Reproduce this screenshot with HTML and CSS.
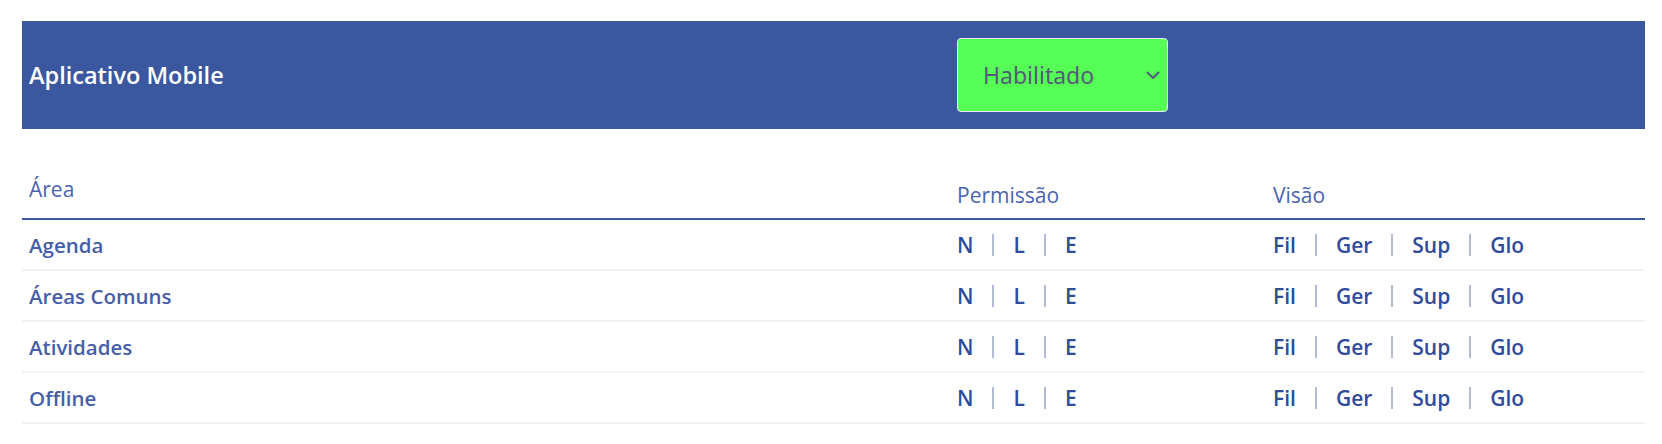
FILE: index.html
```html
<!DOCTYPE html>
<html lang="pt-BR">
<head>
<meta charset="utf-8">
<title>Aplicativo Mobile</title>
<link rel="stylesheet" href="styles.css">
</head>
<body>
<div class="page">
  <div class="bar">
    <div class="bar-title">Aplicativo Mobile</div>
    <div class="bar-control">
      <div class="select-wrap">
        <select class="select">
          <option>Habilitado</option>
          <option>Desabilitado</option>
        </select>
        <svg class="chevron" width="14" height="8" viewBox="0 0 14 8"><path d="M1 1 L7 7 L13 1" fill="none" stroke="#555a7a" stroke-width="2"/></svg>
      </div>
    </div>
    <div></div>
  </div>

  <table class="perm">
    <colgroup>
      <col class="col-area">
      <col class="col-perm">
      <col class="col-vis">
    </colgroup>
    <thead>
      <tr>
        <th class="th-area">Área</th>
        <th>Permissão</th>
        <th>Visão</th>
      </tr>
    </thead>
    <tbody>
      <tr>
        <td class="name">Agenda</td>
        <td><div class="opts"><span>N</span><i class="sep"></i><span>L</span><i class="sep"></i><span>E</span></div></td>
        <td><div class="opts"><span>Fil</span><i class="sep"></i><span>Ger</span><i class="sep"></i><span>Sup</span><i class="sep"></i><span>Glo</span></div></td>
      </tr>
      <tr>
        <td class="name">Áreas Comuns</td>
        <td><div class="opts"><span>N</span><i class="sep"></i><span>L</span><i class="sep"></i><span>E</span></div></td>
        <td><div class="opts"><span>Fil</span><i class="sep"></i><span>Ger</span><i class="sep"></i><span>Sup</span><i class="sep"></i><span>Glo</span></div></td>
      </tr>
      <tr>
        <td class="name">Atividades</td>
        <td><div class="opts"><span>N</span><i class="sep"></i><span>L</span><i class="sep"></i><span>E</span></div></td>
        <td><div class="opts"><span>Fil</span><i class="sep"></i><span>Ger</span><i class="sep"></i><span>Sup</span><i class="sep"></i><span>Glo</span></div></td>
      </tr>
      <tr>
        <td class="name">Offline</td>
        <td><div class="opts"><span>N</span><i class="sep"></i><span>L</span><i class="sep"></i><span>E</span></div></td>
        <td><div class="opts"><span>Fil</span><i class="sep"></i><span>Ger</span><i class="sep"></i><span>Sup</span><i class="sep"></i><span>Glo</span></div></td>
      </tr>
    </tbody>
  </table>
</div>
</body>
</html>
```

FILE: styles.css
```css
html, body {
  margin: 0;
  padding: 0;
  background: #ffffff;
}

.page {
  padding: 21px 17px 0 22px;
  font-family: "Open Sans", "Noto Sans", sans-serif;
}

.bar {
  display: grid;
  grid-template-columns: 928px 316px 1fr;
  align-items: center;
  height: 108px;
  background: #3b57a0;
}

.bar-title {
  padding: 0 7px;
  color: #ffffff;
  font-size: 23.5px;
  font-weight: 600;
}

.bar-control {
  padding: 0 7px;
}

.select-wrap {
  position: relative;
  width: 211px;
  height: 74px;
}

.select {
  appearance: none;
  -webkit-appearance: none;
  box-sizing: border-box;
  width: 211px;
  height: 74px;
  margin: 0;
  padding: 0 0 0 25px;
  border: 1px solid #e6e8f5;
  border-radius: 4px;
  background: #55ff55;
  color: #555a7a;
  font-family: "Noto Sans", "Open Sans", sans-serif;
  font-size: 23px;
  outline: none;
}

.chevron {
  position: absolute;
  right: 8px;
  top: 33px;
  pointer-events: none;
}

.perm {
  width: 100%;
  border-collapse: collapse;
  table-layout: fixed;
}

.col-area { width: 928px; }
.col-perm { width: 316px; }

.perm th {
  height: 90px;
  box-sizing: border-box;
  padding: 0 7px 9px;
  vertical-align: bottom;
  text-align: left;
  font-weight: 400;
  font-size: 21px;
  line-height: 28px;
  color: #4a63ad;
  border-bottom: 2px solid #3b57a0;
}

.perm th.th-area {
  padding-bottom: 15px;
}

.perm td {
  height: 51px;
  box-sizing: border-box;
  padding: 0 7px;
  vertical-align: middle;
  border-bottom: 2px solid #f2f3f8;
}

.name {
  color: #465ea8;
  font-size: 20.5px;
  font-weight: 600;
}

.opts {
  display: flex;
  align-items: center;
  gap: 19px;
  color: #304b9c;
  font-size: 21px;
  font-weight: 600;
}

.sep {
  display: block;
  width: 2px;
  height: 22px;
  background: #b3bad6;
}
```
